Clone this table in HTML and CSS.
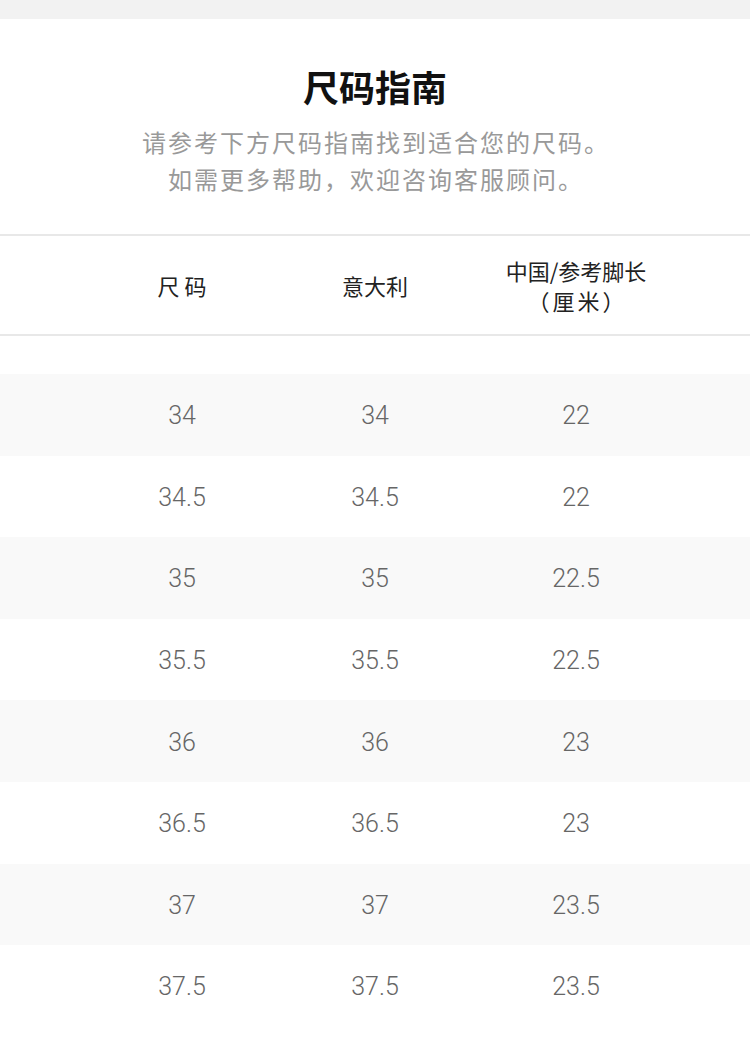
FILE: index.html
```html
<!DOCTYPE html>
<html lang="zh-CN">
<head>
<meta charset="utf-8">
<title>尺码指南</title>
<link rel="stylesheet" href="styles.css">
</head>
<body>
<div class="topbar"></div>
<section class="intro">
  <h1 class="title">尺码指南</h1>
  <p class="subtitle">请参考下方尺码指南找到适合您的尺码。<br>如需更多帮助，欢迎咨询客服顾问。</p>
</section>
<div class="table">
  <div class="head">
    <div class="cell">尺 码</div>
    <div class="cell">意大利</div>
    <div class="cell">中国/参考脚长<br><span class="unit">（厘米）</span></div>
  </div>
  <div class="body">
    <div class="row"><div class="cell">34</div><div class="cell">34</div><div class="cell">22</div></div>
    <div class="row"><div class="cell">34.5</div><div class="cell">34.5</div><div class="cell">22</div></div>
    <div class="row"><div class="cell">35</div><div class="cell">35</div><div class="cell">22.5</div></div>
    <div class="row"><div class="cell">35.5</div><div class="cell">35.5</div><div class="cell">22.5</div></div>
    <div class="row"><div class="cell">36</div><div class="cell">36</div><div class="cell">23</div></div>
    <div class="row"><div class="cell">36.5</div><div class="cell">36.5</div><div class="cell">23</div></div>
    <div class="row"><div class="cell">37</div><div class="cell">37</div><div class="cell">23.5</div></div>
    <div class="row"><div class="cell">37.5</div><div class="cell">37.5</div><div class="cell">23.5</div></div>
  </div>
</div>
</body>
</html>
```

FILE: styles.css
```css
* { box-sizing: border-box; }
html, body {
  margin: 0;
  padding: 0;
  background: #ffffff;
  font-family: "Noto Sans CJK SC", "Noto Sans", sans-serif;
}
.topbar {
  height: 19px;
  background: #f2f2f2;
}
.intro {
  padding: 45px 0 37px;
  text-align: center;
}
.title {
  margin: 0;
  font-size: 36px;
  line-height: 44px;
  font-weight: 700;
  color: #111111;
}
.subtitle {
  margin: 15px 0 0;
  padding-left: 2px;
  font-size: 24px;
  line-height: 37px;
  letter-spacing: 2px;
  color: #999999;
}
.table {
  border-top: 2px solid #e8e8e8;
}
.head,
.row {
  display: grid;
  grid-template-columns: 190px 196px 206px;
  padding-left: 87px;
  align-items: center;
  text-align: center;
}
.head {
  height: 100px;
  border-bottom: 2px solid #e8e8e8;
  font-size: 22px;
  line-height: 30px;
  color: #222222;
}
.unit {
  letter-spacing: 3px;
  padding-left: 3px;
}
.body {
  padding-top: 38px;
}
.row {
  height: 81.6px;
  padding-top: 2px;
  font-family: Roboto, "Noto Sans", sans-serif;
  font-weight: 300;
  font-size: 25px;
  color: #666666;
}
.row:nth-child(odd) {
  background: #f9f9f9;
}
```
